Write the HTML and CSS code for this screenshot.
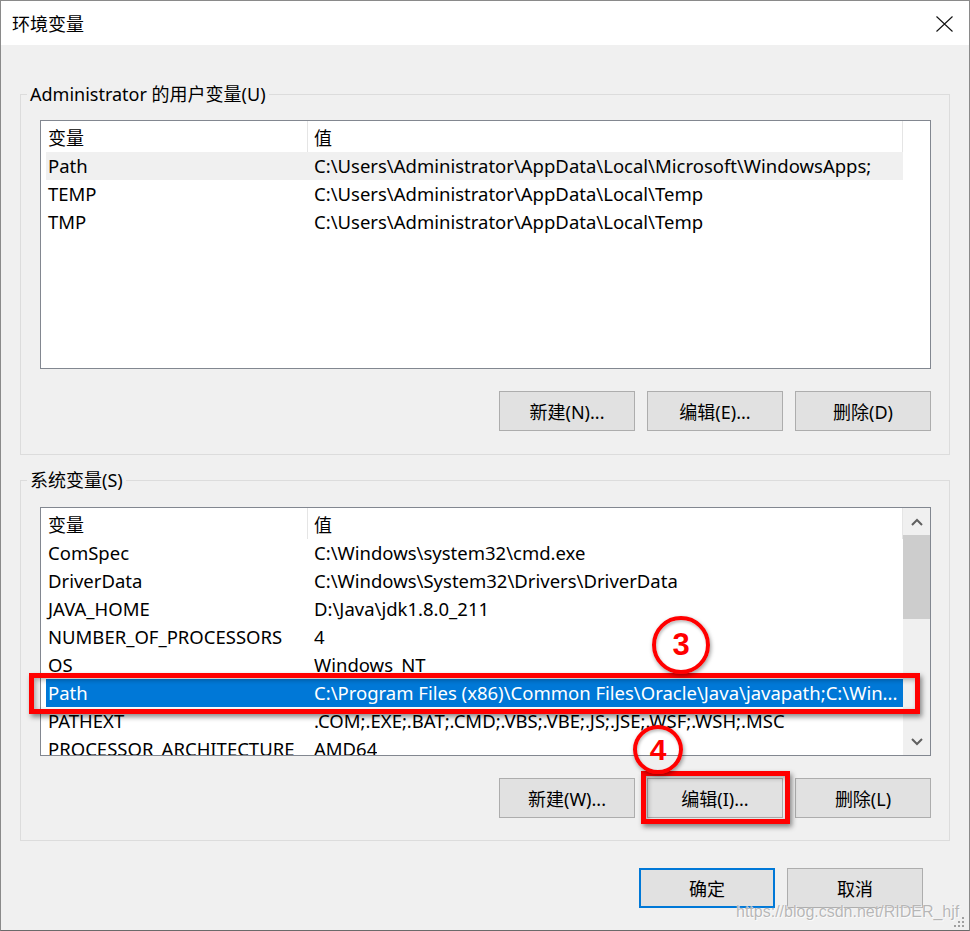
FILE: index.html
```html
<!DOCTYPE html>
<html lang="zh-CN">
<head>
<meta charset="utf-8">
<title>环境变量</title>
<link rel="stylesheet" href="styles.css">
</head>
<body>
<div class="window">
  <div class="titlebar">
    <span class="title">环境变量</span>
    <svg class="close" width="17" height="16" viewBox="0 0 17 16"><path d="M0.5 0.5 L16.5 15.5 M16.5 0.5 L0.5 15.5" stroke="#111" stroke-width="1.1" fill="none"/></svg>
  </div>
  <div class="content">
    <fieldset class="group group-user">
      <legend>Administrator 的用户变量(U)</legend>
      <div class="list">
        <div class="cols">
          <div class="list-header"><div class="h-name">变量</div><div class="h-value">值</div></div>
          <div class="row hover"><div class="r-name">Path</div><div class="r-value">C:\Users\Administrator\AppData\Local\Microsoft\WindowsApps;</div></div>
          <div class="row"><div class="r-name">TEMP</div><div class="r-value">C:\Users\Administrator\AppData\Local\Temp</div></div>
          <div class="row"><div class="r-name">TMP</div><div class="r-value">C:\Users\Administrator\AppData\Local\Temp</div></div>
        </div>
      </div>
      <div class="btn-row">
        <div class="btn">新建(N)...</div>
        <div class="btn">编辑(E)...</div>
        <div class="btn">删除(D)</div>
      </div>
    </fieldset>
    <fieldset class="group group-sys">
      <legend>系统变量(S)</legend>
      <div class="list">
        <div class="cols">
          <div class="list-header"><div class="h-name">变量</div><div class="h-value">值</div></div>
          <div class="row"><div class="r-name">ComSpec</div><div class="r-value">C:\Windows\system32\cmd.exe</div></div>
          <div class="row"><div class="r-name">DriverData</div><div class="r-value">C:\Windows\System32\Drivers\DriverData</div></div>
          <div class="row"><div class="r-name">JAVA_HOME</div><div class="r-value">D:\Java\jdk1.8.0_211</div></div>
          <div class="row"><div class="r-name">NUMBER_OF_PROCESSORS</div><div class="r-value">4</div></div>
          <div class="row"><div class="r-name">OS</div><div class="r-value">Windows_NT</div></div>
          <div class="row selected"><div class="r-name">Path</div><div class="r-value">C:\Program Files (x86)\Common Files\Oracle\Java\javapath;C:\Win...</div></div>
          <div class="row"><div class="r-name">PATHEXT</div><div class="r-value">.COM;.EXE;.BAT;.CMD;.VBS;.VBE;.JS;.JSE;.WSF;.WSH;.MSC</div></div>
          <div class="row"><div class="r-name">PROCESSOR_ARCHITECTURE</div><div class="r-value">AMD64</div></div>
        </div>
        <div class="scrollbar">
          <div class="sb-btn"><svg width="12" height="8" viewBox="0 0 12 8"><path d="M1 7 L6 2 L11 7" stroke="#606060" stroke-width="2" fill="none"/></svg></div>
          <div class="sb-thumb"></div>
          <div class="sb-track"></div>
          <div class="sb-btn"><svg width="12" height="8" viewBox="0 0 12 8"><path d="M1 1 L6 6 L11 1" stroke="#606060" stroke-width="2" fill="none"/></svg></div>
        </div>
      </div>
      <div class="btn-row">
        <div class="btn">新建(W)...</div>
        <div class="btn">编辑(I)...</div>
        <div class="btn">删除(L)</div>
      </div>
    </fieldset>
    <div class="dialog-buttons">
      <div class="btn btn-default">确定</div>
      <div class="btn">取消</div>
    </div>
  </div>

  <div class="watermark">https://blog.csdn.net/RIDER_hjf</div>
  <svg class="grip" width="12" height="12" viewBox="0 0 12 12">
    <rect x="9" y="1" width="2" height="2" fill="#a0a0a0"/>
    <rect x="5" y="5" width="2" height="2" fill="#a0a0a0"/>
    <rect x="9" y="5" width="2" height="2" fill="#a0a0a0"/>
    <rect x="1" y="9" width="2" height="2" fill="#a0a0a0"/>
    <rect x="5" y="9" width="2" height="2" fill="#a0a0a0"/>
    <rect x="9" y="9" width="2" height="2" fill="#a0a0a0"/>
  </svg>

  <div class="mark-rect mark-path"></div>
  <div class="mark-rect mark-edit"></div>
  <div class="mark-circle mark-3">3</div>
  <div class="mark-circle mark-4">4</div>
</div>
</body>
</html>
```

FILE: styles.css
```css
html, body {
  margin: 0;
  padding: 0;
  background: #f0f0f0;
}

.window {
  position: relative;
  width: 970px;
  height: 931px;
  box-sizing: border-box;
  border: 1px solid #8a8a8a;
  border-bottom-color: #6a6a6a;
  background: #f0f0f0;
  font-family: "Noto Sans", "Noto Sans CJK SC", sans-serif;
  font-size: 18px;
  color: #000;
  overflow: hidden;
}

.titlebar {
  height: 44px;
  background: #fff;
  display: flex;
  align-items: center;
  padding-left: 11px;
}

.title {
  font-family: "Noto Sans CJK SC", sans-serif;
  font-size: 18px;
  line-height: 24px;
}

.close {
  margin-left: auto;
  margin-right: 16px;
  margin-top: 1px;
}

.content {
  padding: 37px 19px 0 19px;
}

.group {
  margin: 0;
  min-width: 0;
  border: 1px solid #dcdcdc;
}

.group legend {
  margin-left: -13px;
  padding: 0 3px;
  line-height: 24px;
  font-size: 18px;
}

.group-user {
  padding: 14px 18px 23px 19px;
}

.group-sys {
  margin-top: 13px;
  padding: 15px 18px 22px 19px;
}

.list {
  height: 249px;
  box-sizing: border-box;
  border: 1px solid #828790;
  background: #fff;
  display: flex;
  overflow: hidden;
  font-size: 18.5px;
}

.cols {
  width: 862px;
  flex: none;
}

.list-header {
  display: flex;
  height: 31px;
  align-items: stretch;
  font-size: 18px;
}

.h-name {
  width: 267px;
  box-sizing: border-box;
  padding-left: 7px;
  border-right: 1px solid #e5e5e5;
  display: flex;
  align-items: center;
}

.h-value {
  flex: 1;
  padding-left: 6px;
  border-right: 1px solid #e5e5e5;
  display: flex;
  align-items: center;
}

.row {
  display: flex;
  align-items: center;
  height: 28px;
  box-sizing: border-box;
  padding-bottom: 2px;
  margin-left: 5px;
  white-space: nowrap;
}

.row.hover {
  background: #f0f0f0;
}

.row.selected {
  background: #0078d7;
  color: #fff;
}

.r-name {
  width: 262px;
  flex: none;
  box-sizing: border-box;
  padding-left: 2px;
  overflow: hidden;
}

.r-value {
  padding-left: 6px;
  overflow: hidden;
}

.scrollbar {
  width: 27px;
  flex: none;
  background: #f0f0f0;
  display: flex;
  flex-direction: column;
}

.sb-btn {
  height: 27px;
  display: flex;
  align-items: center;
  justify-content: center;
}

.sb-thumb {
  height: 84px;
  background: #cdcdcd;
}

.sb-track {
  flex: 1;
}

.btn-row {
  display: flex;
  justify-content: flex-end;
  gap: 12px;
  margin-top: 22px;
}

.btn {
  width: 136px;
  height: 40px;
  box-sizing: border-box;
  border: 1px solid #adadad;
  background: #e1e1e1;
  display: flex;
  align-items: center;
  justify-content: center;
  font-size: 18px;
}

.btn-default {
  border: 2px solid #0078d7;
}

.dialog-buttons {
  display: flex;
  justify-content: flex-end;
  gap: 12px;
  margin-top: 27px;
  margin-right: 27px;
}

.watermark {
  position: absolute;
  left: 735px;
  top: 902px;
  font-family: "Liberation Sans", Arial, sans-serif;
  font-size: 16px;
  line-height: 18px;
  color: rgba(170, 170, 170, 0.85);
  text-shadow: 0 0 1px #fff, 1px 1px 0 rgba(255,255,255,0.7);
  white-space: nowrap;
}

.grip {
  position: absolute;
  left: 952px;
  top: 915px;
}

.mark-rect {
  position: absolute;
  box-sizing: border-box;
  border: 5px solid #ff0000;
  box-shadow: 2px 3px 5px rgba(0, 0, 0, 0.45), inset 2px 2px 5px rgba(0, 0, 0, 0.3);
}

.mark-path {
  left: 28px;
  top: 672px;
  width: 891px;
  height: 41px;
}

.mark-edit {
  left: 640px;
  top: 770px;
  width: 149px;
  height: 53px;
}

.mark-circle {
  position: absolute;
  box-sizing: border-box;
  border: 4px solid #ff0000;
  border-radius: 50%;
  display: flex;
  align-items: center;
  justify-content: center;
  font-family: "Liberation Sans", Arial, sans-serif;
  font-weight: bold;
  color: #ff0000;
  box-shadow: 1px 2px 4px rgba(0, 0, 0, 0.4), inset 1px 2px 3px rgba(0, 0, 0, 0.25);
}

.mark-3 {
  left: 651px;
  top: 615px;
  width: 58px;
  height: 58px;
  font-size: 31px;
}

.mark-4 {
  left: 632px;
  top: 724px;
  width: 50px;
  height: 49px;
  font-size: 30px;
}
```
